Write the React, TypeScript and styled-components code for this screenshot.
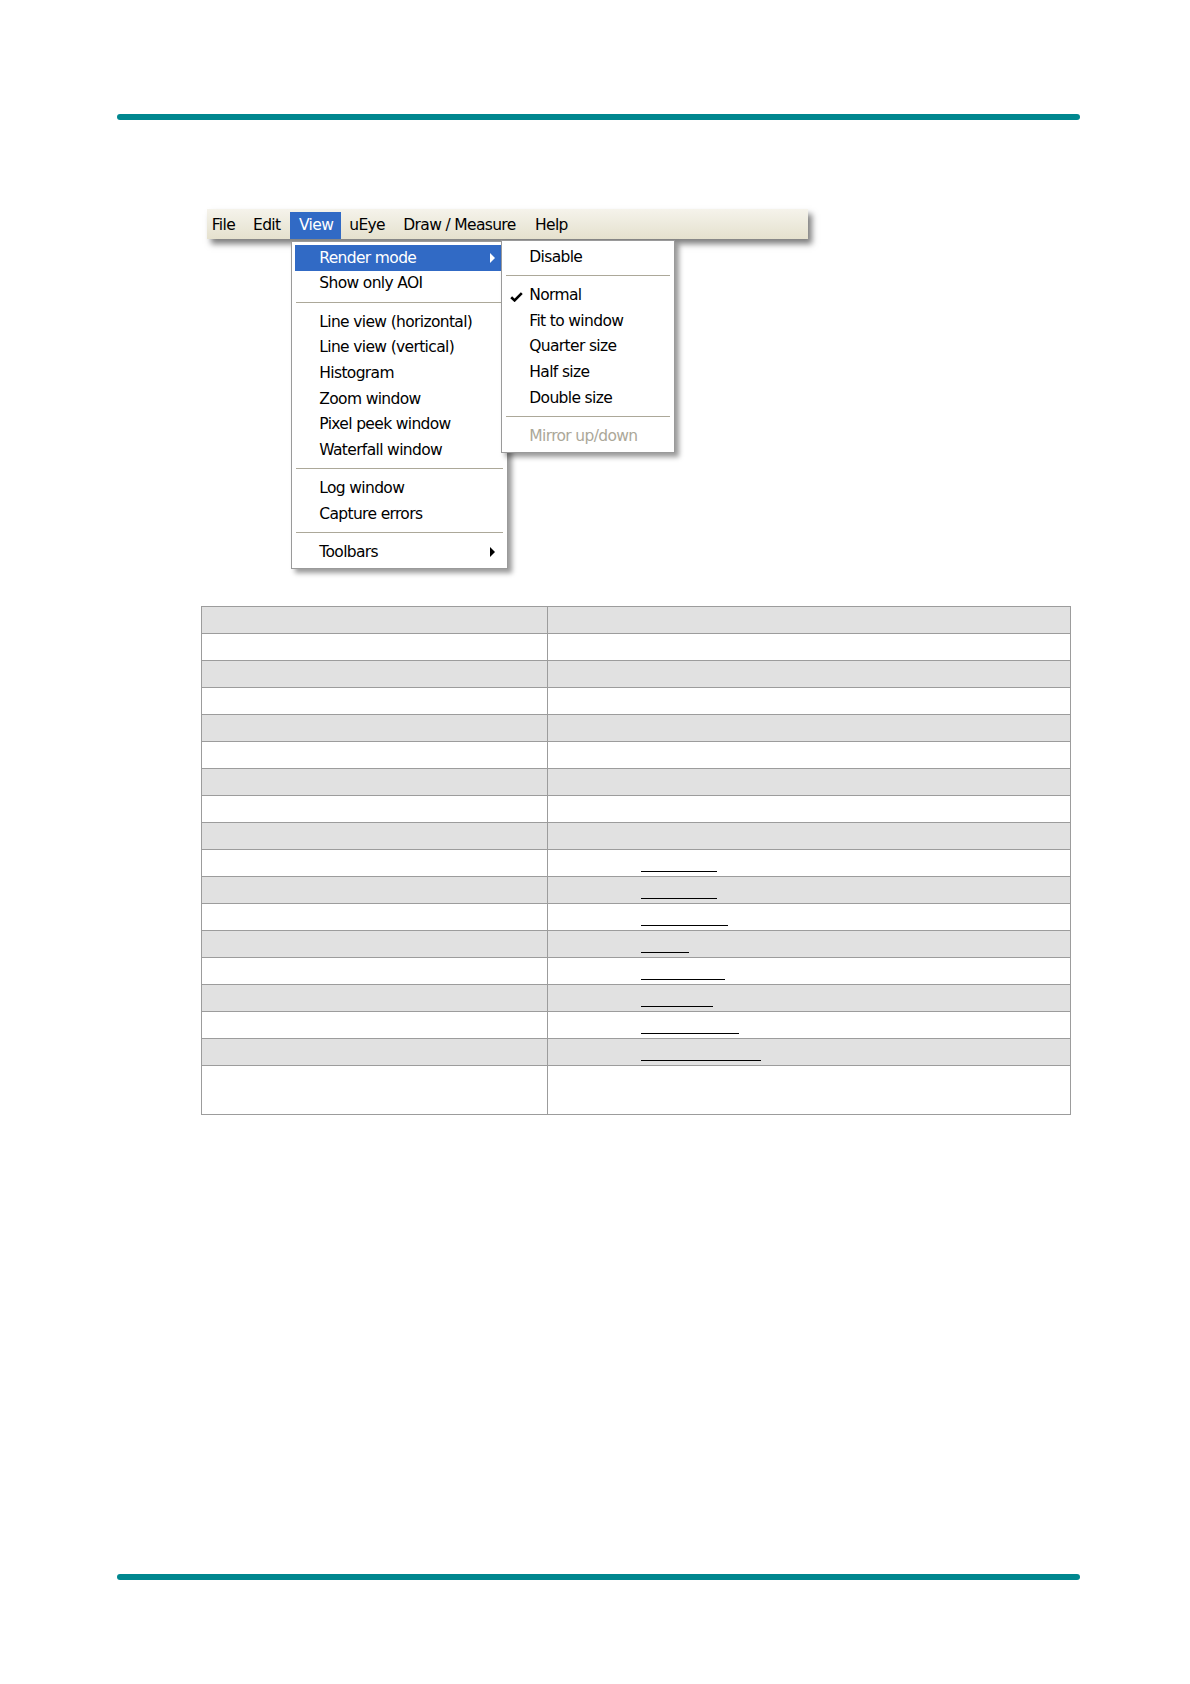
import React from "react";
import styled, { createGlobalStyle } from "styled-components";

const GlobalStyle = createGlobalStyle`
  html, body { margin: 0; padding: 0; background: #ffffff; }
  body { font-family: "DejaVu Sans", Verdana, sans-serif; }
`;

const Page = styled.div`
  width: 1190px;
  min-height: 1684px;
  padding-top: 114px;
  box-sizing: border-box;
  display: flex;
  flex-direction: column;
  align-items: flex-start;
`;

const Rule = styled.div<{ $top: number }>`
  margin-top: ${(p) => p.$top}px;
  margin-left: 117px;
  width: 963px;
  height: 6px;
  border-radius: 3px;
  background: #00878f;
`;

const Figure = styled.div`
  position: relative;
  margin-top: 89px;
  margin-left: 207px;
  width: 620px;
  height: 397px;
  font-family: "DejaVu Sans", Verdana, sans-serif;
  font-size: 15.5px;
  letter-spacing: -0.65px;
  color: #000;
`;

const MenuBar = styled.div`
  display: flex;
  width: 601px;
  height: 30px;
  box-sizing: border-box;
  padding-top: 2.7px;
  background: linear-gradient(#f5f3eb, #e5e1ce);
  box-shadow: 4px 5px 6px rgba(0, 0, 0, 0.5);
`;

const BarItem = styled.div<{ $w: number; $indent: number; $active?: boolean }>`
  width: ${(p) => p.$w}px;
  padding-left: ${(p) => p.$indent}px;
  box-sizing: border-box;
  height: 27.3px;
  line-height: 27px;
  white-space: nowrap;
  background: ${(p) => (p.$active ? "#316ac5" : "transparent")};
  color: ${(p) => (p.$active ? "#ffffff" : "#000000")};
`;

const Menu = styled.div<{ $left: number; $top: number; $width: number; $z: number }>`
  position: absolute;
  left: ${(p) => p.$left}px;
  top: ${(p) => p.$top}px;
  width: ${(p) => p.$width}px;
  z-index: ${(p) => p.$z};
  box-sizing: border-box;
  background: #ffffff;
  border: 1px solid #9a9a9a;
  padding: 3px;
  box-shadow: 4px 4px 5px rgba(0, 0, 0, 0.4);
`;

const Item = styled.div<{ $active?: boolean; $disabled?: boolean }>`
  display: flex;
  align-items: center;
  height: 25.6px;
  padding-right: 9px;
  white-space: nowrap;
  background: ${(p) => (p.$active ? "#316ac5" : "transparent")};
  color: ${(p) => (p.$active ? "#ffffff" : p.$disabled ? "#aca899" : "#000000")};
`;

const Gutter = styled.span`
  width: 24.3px;
  flex: none;
  display: flex;
  justify-content: center;
  align-items: center;
`;

const Label = styled.span`
  flex: 1;
`;

const Arrow = styled.span`
  width: 0;
  height: 0;
  border-left: 5px solid currentColor;
  border-top: 5px solid transparent;
  border-bottom: 5px solid transparent;
`;

const CheckIcon = styled.svg`
  width: 13px;
  height: 10px;
  margin-top: 3px;
  margin-left: -2px;
`;

const Sep = styled.div`
  height: 12.8px;
  display: flex;
  align-items: center;
  padding: 0 1px;
  &::after {
    content: "";
    flex: 1;
    height: 1px;
    background: #aca899;
  }
`;

const Table = styled.div`
  margin-left: 201px;
  width: 870px;
  box-sizing: border-box;
  border-top: 1px solid #9c9c9c;
  border-left: 1px solid #9c9c9c;
`;

const Row = styled.div<{ $shade: boolean; $h: number }>`
  display: grid;
  grid-template-columns: 346px 1fr;
  height: ${(p) => p.$h}px;
  background: ${(p) => (p.$shade ? "#e1e1e1" : "#ffffff")};
`;

const Cell = styled.div`
  box-sizing: border-box;
  border-right: 1px solid #9c9c9c;
  border-bottom: 1px solid #9c9c9c;
`;

const LinkLine = styled.span<{ $w: number }>`
  display: block;
  margin-left: 93px;
  margin-top: 21px;
  width: ${(p) => p.$w}px;
  height: 0;
  border-bottom: 1px solid #000000;
`;

const barItems = [
  { label: "File", w: 37.5, indent: 4.7 },
  { label: "Edit", w: 45.5, indent: 8.5 },
  { label: "View", w: 50.7, indent: 9, active: true },
  { label: "uEye", w: 53.8, indent: 8.6 },
  { label: "Draw / Measure", w: 131.5, indent: 8.8 },
  { label: "Help", w: 54, indent: 9 },
];

type Entry =
  | { sep: true }
  | { sep?: false; label: string; active?: boolean; arrow?: boolean; check?: boolean; disabled?: boolean };

const viewMenu: Entry[] = [
  { label: "Render mode", active: true, arrow: true },
  { label: "Show only AOI" },
  { sep: true },
  { label: "Line view (horizontal)" },
  { label: "Line view (vertical)" },
  { label: "Histogram" },
  { label: "Zoom window" },
  { label: "Pixel peek window" },
  { label: "Waterfall window" },
  { sep: true },
  { label: "Log window" },
  { label: "Capture errors" },
  { sep: true },
  { label: "Toolbars", arrow: true },
];

const renderMenu: Entry[] = [
  { label: "Disable" },
  { sep: true },
  { label: "Normal", check: true },
  { label: "Fit to window" },
  { label: "Quarter size" },
  { label: "Half size" },
  { label: "Double size" },
  { sep: true },
  { label: "Mirror up/down", disabled: true },
];

const linkWidths: Record<number, number> = {
  9: 76,
  10: 76,
  11: 87,
  12: 48,
  13: 84,
  14: 72,
  15: 98,
  16: 120,
};

function Check() {
  return (
    <CheckIcon viewBox="0 0 13 10">
      <path d="M1.2 5.2 L4.6 8.4 L11.8 1.2" fill="none" stroke="#000" strokeWidth="2.6" strokeLinejoin="miter" />
    </CheckIcon>
  );
}

function MenuList({ entries }: { entries: Entry[] }) {
  return (
    <>
      {entries.map((e, i) =>
        e.sep ? (
          <Sep key={i} />
        ) : (
          <Item key={i} $active={e.active} $disabled={e.disabled}>
            <Gutter>{e.check ? <Check /> : null}</Gutter>
            <Label>{e.label}</Label>
            {e.arrow ? <Arrow /> : null}
          </Item>
        )
      )}
    </>
  );
}

export default function App() {
  const rows = Array.from({ length: 18 }, (_, i) => i);
  return (
    <>
      <GlobalStyle />
      <Page>
        <Rule $top={0} />
        <Figure>
          <MenuBar>
            {barItems.map((b) => (
              <BarItem key={b.label} $w={b.w} $indent={b.indent} $active={b.active}>
                {b.label}
              </BarItem>
            ))}
          </MenuBar>
          <Menu $left={84} $top={32} $width={217} $z={1}>
            <MenuList entries={viewMenu} />
          </Menu>
          <Menu $left={294} $top={31} $width={174} $z={2}>
            <MenuList entries={renderMenu} />
          </Menu>
        </Figure>
        <Table>
          {rows.map((i) => (
            <Row key={i} $shade={i % 2 === 0 && i < 17} $h={i === 17 ? 49 : 27}>
              <Cell />
              <Cell>{linkWidths[i] ? <LinkLine $w={linkWidths[i]} /> : null}</Cell>
            </Row>
          ))}
        </Table>
        <Rule $top={459} />
      </Page>
    </>
  );
}
